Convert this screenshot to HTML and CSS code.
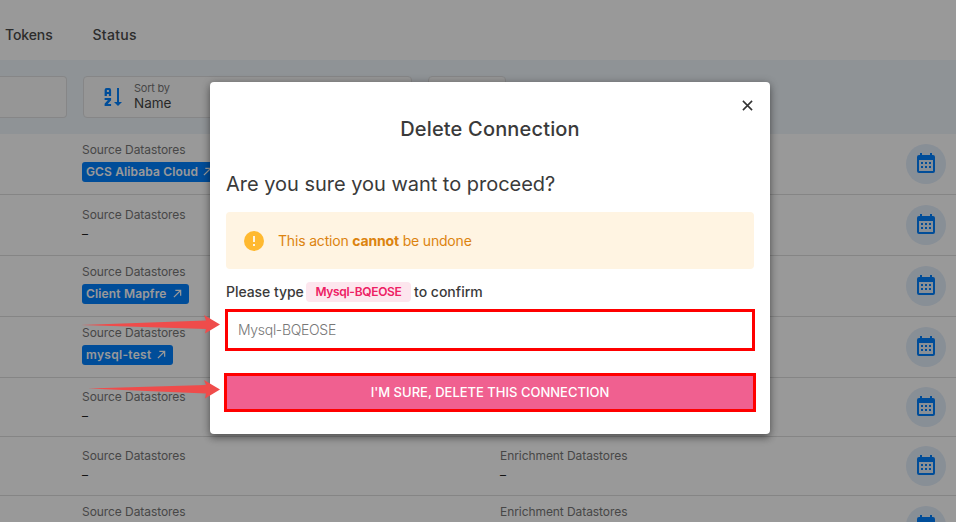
FILE: index.html
```html
<!DOCTYPE html>
<html lang="en">
<head>
<meta charset="utf-8">
<title>Delete Connection</title>
<link rel="stylesheet" href="styles.css">
</head>
<body>
<svg class="defs" aria-hidden="true">
  <symbol id="calendar" viewBox="0 0 24 24"><path d="M7 10h2v2H7v-2m14-5v14a2 2 0 0 1-2 2H5a2 2 0 0 1-2-2V5a2 2 0 0 1 2-2h1V1h2v2h8V1h2v2h1a2 2 0 0 1 2 2M5 8v11h14V8H5m10 4v-2h2v2h-2m-4 0v-2h2v2h-2m-4 2h2v2H7v-2m8 2v-2h2v2h-2m-4 0v-2h2v2h-2Z"/></symbol>
  <symbol id="open" viewBox="0 0 10 10"><path d="M1 9 8.400 1.600M2.600 1.500h5.900v5.900" fill="none" stroke="currentColor" stroke-width="1.400"/></symbol>
</svg>
<div class="page">
  <nav class="tabs"><span class="tab tokens">Tokens</span><span class="tab status">Status</span></nav>
  <div class="filters">
    <div class="field search"></div>
    <div class="field sort">
      <svg class="sort-icon" viewBox="0 0 20 22"><path fill-rule="evenodd" d="M3.500 2h2.700q1.900 0 1.900 2v6H5.900V8H3.900v2H1.600V4q0-2 1.900-2m.4 2v2h2V4M1.600 12h6.500v2.200L4.800 18h3.300v2H1.600v-2.200L4.900 14H1.600M14 2h2v14h3l-4 4-4-4h3z"/></svg>
      <div class="sort-text"><span class="sort-label">Sort by</span><span class="sort-value">Name</span></div>
    </div>
    <div class="field extra"></div>
  </div>
  <div class="row linked">
    <div class="source"><div class="label">Source Datastores</div><span class="badge gcs"><span>GCS Alibaba Cloud</span><svg><use href="#open"/></svg></span></div>
    <div class="enrich"></div><div class="round"><svg><use href="#calendar"/></svg></div>
  </div>
  <div class="row empty">
    <div class="source"><div class="label">Source Datastores</div><div class="dash">–</div></div>
    <div class="enrich"></div><div class="round"><svg><use href="#calendar"/></svg></div>
  </div>
  <div class="row linked">
    <div class="source"><div class="label">Source Datastores</div><span class="badge mapfre"><span>Client Mapfre</span><svg><use href="#open"/></svg></span></div>
    <div class="enrich"></div><div class="round"><svg><use href="#calendar"/></svg></div>
  </div>
  <div class="row linked">
    <div class="source"><div class="label">Source Datastores</div><span class="badge mysql"><span>mysql-test</span><svg><use href="#open"/></svg></span></div>
    <div class="enrich"></div><div class="round"><svg><use href="#calendar"/></svg></div>
  </div>
  <div class="row compact">
    <div class="source"><div class="label">Source Datastores</div><div class="dash">–</div></div>
    <div class="enrich"></div><div class="round"><svg><use href="#calendar"/></svg></div>
  </div>
  <div class="row compact">
    <div class="source"><div class="label">Source Datastores</div><div class="dash">–</div></div>
    <div class="enrich"><div class="label">Enrichment Datastores</div><div class="dash">–</div></div><div class="round"><svg><use href="#calendar"/></svg></div>
  </div>
  <div class="row linked">
    <div class="source"><div class="label">Source Datastores</div></div>
    <div class="enrich"><div class="label">Enrichment Datastores</div></div><div class="round"><svg><use href="#calendar"/></svg></div>
  </div>
</div>
<div class="overlay">
  <section class="dialog" role="dialog">
    <div class="close-bar"><svg viewBox="0 0 12 12"><path d="m1 1 10 10M11 1 1 11"/></svg></div>
    <h1>Delete Connection</h1>
    <h2>Are you sure you want to proceed?</h2>
    <div class="alert">
      <svg viewBox="0 0 20 20"><circle cx="10" cy="10" r="10" fill="#ffb930"/><path d="M9 5h2v6H9zm0 8h2v2H9z" fill="#fff4e2"/></svg>
      <span class="alert-text">This action <b>cannot</b> be undone</span>
    </div>
    <div class="prompt"><span class="please">Please type</span><span class="code">Mysql-BQEOSE</span><span class="confirm">to confirm</span></div>
    <div class="entry"><span>Mysql-BQEOSE</span></div>
    <div class="submit"><span>I'M SURE, DELETE THIS CONNECTION</span></div>
  </section>
</div>
<svg class="arrow first" viewBox="0 0 140 20"><path d="M0 10 125 5.500 123 0 139 9.500 124 18.500 125 14z"/></svg>
<svg class="arrow second" viewBox="0 0 140 20"><path d="M0 8.500 118 5 116 0 132 9.500 117 18.500 118 13.500z"/></svg>
</body>
</html>
```
FILE: styles.css
```css
* { box-sizing: border-box; }
body { margin: 0; font-family: Inter, sans-serif; color: #3a3a3a; background: #fff; }
.defs { position: absolute; width: 0; height: 0; }
.page { height: 522px; overflow: hidden; }
.tabs { height: 60px; display: flex; padding: 25px 0 0 5px; font-size: 14px; line-height: 20px; font-weight: 500; letter-spacing: -.1px; color: #4a4a4a; }
.status { letter-spacing: .3px; }
.tokens { width: 87.500px; }
.filters { height: 74px; display: flex; gap: 16px; padding-top: 16px; background: #eef5fa; }
.field { height: 42px; background: #fbfbfb; border: 1px solid #dfe0e2; border-radius: 4px; }
.search { width: 67px; border-left: 0; border-radius: 0 4px 4px 0; }
.sort { width: 329px; display: flex; padding: 4px 0 0 19px; }
.extra { width: 78px; }
.sort-icon { width: 20px; height: 22px; margin-top: 5px; fill: #0080ff; }
.sort-text { display: flex; flex-direction: column; margin-left: 11px; }
.sort-label { font-size: 11px; line-height: 15px; color: #777; letter-spacing: -.25px; }
.sort-value { font-size: 13.500px; line-height: 14px; color: #444; }
.row { height: 61px; display: flex; border-bottom: 1px solid #dedede; padding-left: 82px; }
.source { width: 418px; }
.enrich { width: 406px; }
.linked { padding-top: 6px; }
.empty { padding-top: 10px; }
.compact { height: 59px; padding-top: 9px; }
.label { font-size: 12px; line-height: 20px; color: #777; letter-spacing: -.07px; }
.dash { font-size: 12px; line-height: 18px; color: #222; }
.badge { display: flex; align-items: center; justify-content: space-between; height: 20px; margin-top: 2px; padding: 0 7px 1px 4px; border-radius: 3px; background: #0080ff; color: #fff; font-size: 12px; font-weight: 600; white-space: nowrap; }
.badge svg { width: 9px; height: 9px; }
.gcs { width: 137px; letter-spacing: .13px; }
.mapfre { width: 107px; letter-spacing: .16px; }
.mysql { width: 91px; letter-spacing: .3px; }
.round { width: 40px; height: 40px; border-radius: 50%; background: #e3eefb; display: flex; align-items: center; justify-content: center; margin-top: 4px; }
.empty .round { margin-top: 0; }
.compact .round { margin-top: 0; }
.round svg { width: 24px; height: 24px; fill: #0080ff; }
.overlay { position: absolute; inset: 0; background: rgba(0,0,0,.4); padding: 82px 0 0 210px; }
.dialog { width: 560px; height: 352px; background: #fff; border-radius: 4px; padding: 0 16px; box-shadow: 0 5px 7px rgba(0,0,0,.25), 0 1px 8px rgba(0,0,0,.3); }
.close-bar { height: 35px; display: flex; justify-content: flex-end; padding: 18px 1.500px 0 0; }
.close-bar svg { width: 11px; height: 11px; fill: none; stroke: #333; stroke-width: 1.7; }
h1, h2 { margin: 0; font-size: 20px; line-height: 24px; font-weight: 500; white-space: nowrap; }
h1 { text-align: center; letter-spacing: .17px; }
h2 { font-weight: 400; margin-top: 31px; letter-spacing: -.02px; }
.alert { height: 57px; margin-top: 16px; border-radius: 4px; background: #fff4e2; display: flex; align-items: center; padding-left: 18px; gap: 14px; color: #dc830f; font-size: 14px; letter-spacing: -.18px; }
.alert svg { width: 20px; height: 20px; }
.alert b { font-weight: 700; }
.prompt { height: 20px; margin-top: 13px; display: flex; align-items: center; font-size: 14px; font-weight: 500; white-space: nowrap; }
.please, .confirm { position: relative; top: -1px; }
.please { width: 80px; letter-spacing: -.05px; }
.code { width: 105px; height: 20px; border-radius: 4px; background: #fde6ee; color: #ed2064; font-size: 12px; font-weight: 600; letter-spacing: -.3px; display: flex; align-items: center; justify-content: center; padding-bottom: 1px; margin-right: 3px; }
.entry { height: 42px; margin: 7px -1px 0; border: 3px solid #f00; display: flex; align-items: center; padding: 0 0 2px 10px; color: #777; font-size: 14px; font-weight: 300; letter-spacing: -.3px; }
.submit { height: 39px; margin: 22px -2px 0; border: 3px solid #f00; background: #f06090; color: #fff; display: flex; align-items: center; justify-content: center; padding-bottom: 2px; font-size: 13px; font-weight: 500; white-space: nowrap; }
.arrow { position: absolute; width: 140px; height: 20px; fill: #ef4c4b; }
.first { left: 81px; top: 315px; }
.second { left: 88px; top: 380px; }
```
